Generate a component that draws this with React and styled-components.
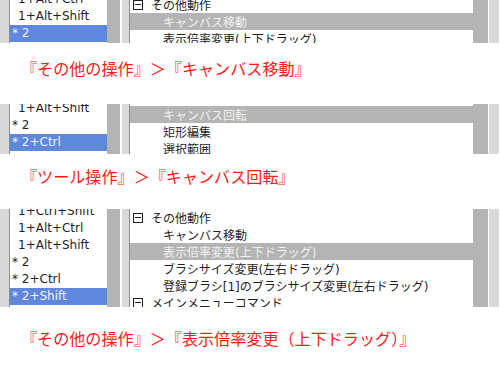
import styled, { createGlobalStyle } from 'styled-components';

const GlobalStyle = createGlobalStyle`
  html, body {
    margin: 0;
    padding: 0;
    background: #ffffff;
  }
  body {
    width: 500px;
    height: 368px;
    overflow: hidden;
    font-family: "DejaVu Sans", "Noto Sans CJK JP", sans-serif;
  }
`;

const shots = [
  {
    height: 43,
    listOffset: -9,
    treeOffset: -4,
    keys: [
      { label: '1+Alt+Ctrl' },
      { label: '1+Alt+Shift' },
      { label: '2', star: true, selected: true },
    ],
    tree: [
      { label: 'その他動作', folder: true },
      { label: 'キャンバス移動', depth: 1, selected: true },
      { label: '表示倍率変更(上下ドラッグ)', depth: 1 },
    ],
    caption: '『その他の操作』＞『キャンバス移動』',
    gapTop: 17,
    gapBottom: 28,
  },
  {
    height: 50,
    listOffset: -4,
    treeOffset: 2,
    keys: [
      { label: '1+Alt+Shift' },
      { label: '2', star: true },
      { label: '2+Ctrl', star: true, selected: true },
    ],
    tree: [
      { label: 'キャンバス回転', depth: 1, selected: true },
      { label: '矩形編集', depth: 1 },
      { label: '選択範囲', depth: 1 },
    ],
    caption: '『ツール操作』＞『キャンバス回転』',
    gapTop: 14,
    gapBottom: 25,
  },
  {
    height: 98,
    listOffset: -6,
    treeOffset: 0,
    keys: [
      { label: '1+Ctrl+Shift' },
      { label: '1+Alt+Ctrl' },
      { label: '1+Alt+Shift' },
      { label: '2', star: true },
      { label: '2+Ctrl', star: true },
      { label: '2+Shift', star: true, selected: true },
    ],
    tree: [
      { label: 'その他動作', folder: true },
      { label: 'キャンバス移動', depth: 1 },
      { label: '表示倍率変更(上下ドラッグ)', depth: 1, selected: true },
      { label: 'ブラシサイズ変更(左右ドラッグ)', depth: 1 },
      { label: '登録ブラシ[1]のブラシサイズ変更(左右ドラッグ)', depth: 1 },
      { label: 'メインメニューコマンド', folder: true },
    ],
    caption: '『その他の操作』＞『表示倍率変更（上下ドラッグ）』',
    gapTop: 23,
    gapBottom: 0,
  },
];

export default function App() {
  return (
    <Page>
      <GlobalStyle />
      {shots.map((shot, i) => (
        <Shot key={i}>
          <Panel $height={shot.height}>
            <Gutter />
            <KeyList>
              <Scroller $offset={shot.listOffset}>
                {shot.keys.map((k) => (
                  <KeyRow key={k.label + (k.star ? '*' : '')} $selected={k.selected} $star={k.star}>
                    {k.star ? `* ${k.label}` : k.label}
                  </KeyRow>
                ))}
              </Scroller>
            </KeyList>
            <ScrollTrack $width={13} />
            <Seam $width={2} />
            <Splitter />
            <Tree>
              <Scroller $offset={shot.treeOffset}>
                {shot.tree.map((n) => (
                  <TreeRow key={n.label} $selected={n.selected} $depth={n.depth || 0}>
                    {n.folder && <Toggle />}
                    <span>{n.label}</span>
                  </TreeRow>
                ))}
              </Scroller>
            </Tree>
            <ScrollTrack $width={15} />
            <Seam $width={1} />
            <Edge />
            <Seam $width={1} />
          </Panel>
          <Caption $top={shot.gapTop} $bottom={shot.gapBottom}>
            {shot.caption}
          </Caption>
        </Shot>
      ))}
    </Page>
  );
}

const Page = styled.div`
  width: 500px;
  display: flex;
  flex-direction: column;
`;

const Shot = styled.section`
  display: flex;
  flex-direction: column;
`;

const Panel = styled.div`
  height: ${({ $height }) => $height}px;
  display: flex;
  overflow: hidden;
  background: #ffffff;
  font-size: 12px;
  color: #1e1e1e;
`;

const Gutter = styled.div`
  width: 9px;
  flex: none;
  background: #d9d9d9;
  border-right: 1px solid #8c8c8c;
`;

const KeyList = styled.div`
  width: 97px;
  flex: none;
  overflow: hidden;
  background: #ffffff;
`;

const Scroller = styled.div`
  margin-top: ${({ $offset }) => $offset}px;
  display: flex;
  flex-direction: column;
`;

const KeyRow = styled.div`
  height: 17px;
  line-height: 17px;
  padding-left: ${({ $star }) => ($star ? 2 : 8)}px;
  white-space: nowrap;
  background: ${({ $selected }) => ($selected ? '#5f87dc' : 'transparent')};
  color: ${({ $selected }) => ($selected ? '#eef2fb' : '#1e1e1e')};
`;

const ScrollTrack = styled.div`
  width: ${({ $width }) => $width}px;
  flex: none;
  background: #b4b4b4;
`;

const Seam = styled.div`
  width: ${({ $width }) => $width}px;
  flex: none;
  background: #ffffff;
`;

const Splitter = styled.div`
  width: 7px;
  flex: none;
  background: #d9d9d9;
  border-right: 1px solid #8c8c8c;
`;

const Tree = styled.div`
  width: 343px;
  flex: none;
  overflow: hidden;
  background: #ffffff;
`;

const TreeRow = styled.div`
  height: 17px;
  display: flex;
  align-items: center;
  gap: 8px;
  padding-left: ${({ $depth }) => ($depth ? 33 : 3)}px;
  white-space: nowrap;
  background: ${({ $selected }) => ($selected ? '#b4b4b4' : 'transparent')};
  color: ${({ $selected }) => ($selected ? '#f2f2f2' : '#1e1e1e')};
`;

const Toggle = styled.span`
  position: relative;
  width: 8px;
  height: 8px;
  flex: none;
  border: 1px solid #1e1e1e;

  &::after {
    content: '';
    position: absolute;
    left: 1px;
    right: 1px;
    top: 3.5px;
    height: 1px;
    background: #1e1e1e;
  }
`;

const Edge = styled.div`
  width: 10px;
  flex: none;
  background: #d9d9d9;
`;

const Caption = styled.p`
  margin: ${({ $top }) => $top}px 0 ${({ $bottom }) => $bottom}px;
  padding-left: 21px;
  height: 16px;
  line-height: 16px;
  font-family: "Noto Sans CJK JP", sans-serif;
  font-size: 16.1px;
  color: #ff1a1a;
  white-space: nowrap;
`;
